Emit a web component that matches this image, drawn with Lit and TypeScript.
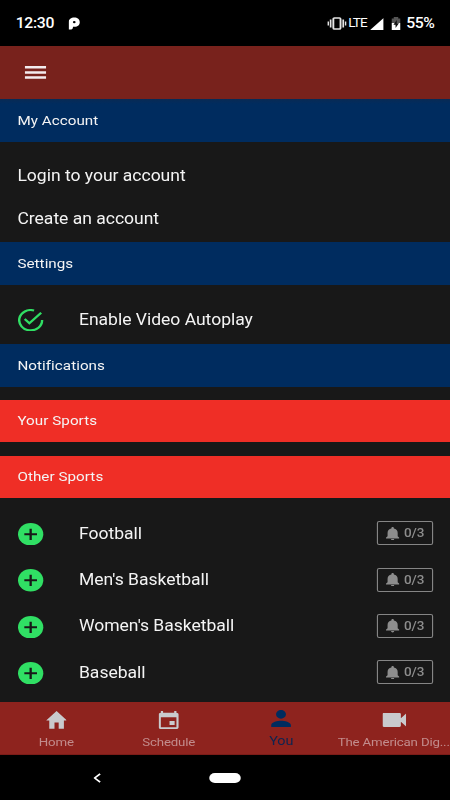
import { LitElement, html, css, svg } from "lit";
import { customElement } from "lit/decorators.js";

const SPORTS = ["Football", "Men's Basketball", "Women's Basketball", "Baseball"];

const TABS = [
  { key: "home", label: "Home", box: "2 3 20 17", w: 18.6, h: 17.8, d: "M10 20v-6h4v6h5v-8h3L12 3 2 12h3v8z" },
  {
    key: "schedule",
    label: "Schedule",
    box: "3 1 18 20",
    w: 17.8,
    h: 18,
    d: "M17.400 12h-4.600v4.600h4.600v-4.600zM17 1v2H7V1H5v2H5c-1.110 0-1.990.9-1.990 2L3 19c0 1.100.89 2 2 2h14c1.100 0 2-.9 2-2V5c0-1.100-.9-2-2-2V1h-2zm2 18H5V8h14v11z",
  },
  {
    key: "you",
    label: "You",
    box: "4 4 16 16",
    w: 17.6,
    h: 17.3,
    d: "M12 12c2.210 0 4-1.790 4-4s-1.790-4-4-4-4 1.790-4 4 1.790 4 4 4zm0 2c-2.670 0-8 1.340-8 4v2h16v-2c0-2.660-5.330-4-8-4z",
  },
  {
    key: "video",
    label: "The American Dig...",
    box: "3 6 18 12",
    w: 21,
    h: 14,
    d: "M17 10.500V7c0-.55-.45-1-1-1H4c-.55 0-1 .45-1 1v10c0 .55.45 1 1 1h12c.55 0 1-.45 1-1v-3.500l4 4v-11l-4 4z",
  },
];

@customElement("app-root")
export class AppRoot extends LitElement {
  static styles = css`
    :host {
      display: block;
      width: 450px;
      height: 800px;
      overflow: hidden;
      background: #181818;
    }
    * { box-sizing: border-box; }
    svg { display: block; flex: none; }
    /* 400px wide layout stretched to the full window width */
    .screen {
      width: 400px;
      height: 800px;
      transform: scaleX(1.125);
      transform-origin: 0 0;
      display: flex;
      flex-direction: column;
      font-family: Roboto, "Liberation Sans", sans-serif;
      color: #f4f4f4;
      white-space: nowrap;
    }
    .status {
      height: 46px;
      flex: none;
      background: #000;
      display: flex;
      align-items: center;
      padding: 0 14px 0 14px;
      font-size: 14px;
      font-weight: 500;
      color: #fff;
    }
    .clock { width: 47px; letter-spacing: -0.3px; }
    .grow { flex: 1; }
    .vibrate { margin-right: 2px; }
    .lte { font-size: 12px; font-weight: 400; letter-spacing: -0.8px; width: 17px; }
    .signal { margin: 1px 7px 0 2.500px; }
    .battery { margin-right: 5px; }
    .pct { width: 25px; letter-spacing: -0.4px; }
    .bar {
      height: 53px;
      flex: none;
      background: #78221c;
      display: flex;
      align-items: center;
      padding-left: 21.500px;
    }
    .head {
      height: 42.500px;
      flex: none;
      background: #002c5f;
      display: flex;
      align-items: center;
      padding-left: 15.500px;
      padding-bottom: 1.500px;
      font-size: 13.500px;
      letter-spacing: 0.04px;
    }
    .first { background: linear-gradient(#092a54, #002c5f 5px); padding-bottom: 0.5px; }
    .red { background: #ef2e26; }
    .links {
      height: 100.500px;
      flex: none;
      padding-top: 13px;
      display: flex;
      flex-direction: column;
      font-size: 15.600px;
      letter-spacing: -0.02px;
    }
    .link { height: 43.300px; padding-left: 15.500px; display: flex; align-items: center; }
    .setting { height: 59.500px; flex: none; padding-top: 12.300px; display: flex; }
    .gap { height: 13.300px; flex: none; }
    .sports { flex: 1; padding-top: 12.500px; }
    .row {
      height: 46.300px;
      width: 400px;
      display: flex;
      align-items: center;
      padding: 0 15px 0 16px;
      font-size: 15.600px;
      letter-spacing: -0.02px;
    }
    .add { margin-top: 1px; }
    .name { flex: 1; margin-left: 31.700px; }
    .alert {
      width: 50px;
      height: 24px;
      border: 1px solid #858585;
      border-radius: 2px;
      display: flex;
      align-items: center;
      padding-left: 7px;
      gap: 4px;
      color: #8d8d8d;
      font-size: 12px;
      font-weight: 500;
      letter-spacing: -0.05px;
      margin-bottom: 0.6px;
    }
    .tabs {
      height: 53px;
      flex: none;
      background: #8e231e;
      border-bottom: 1px solid #7c1c18;
      display: grid;
      grid-template-columns: repeat(4, 100px);
    }
    .tab {
      display: flex;
      flex-direction: column;
      align-items: center;
      font-size: 11.800px;
      letter-spacing: -0.15px;
      line-height: 16px;
      color: #c28c8c;
    }
    .glyph { height: 31.500px; padding-top: 9.200px; fill: #c9cacd; }
    .you { color: #0f2450; font-size: 12.800px; }
    .you .glyph { fill: #002c5f; padding-top: 7.700px; height: 31px; }
    .video .glyph { padding-top: 11px; }
    .system {
      height: 45px;
      flex: none;
      background: #000;
      display: grid;
      grid-template-columns: 173px 54px 1fr;
      align-items: center;
      justify-items: center;
    }
    .pill { width: 28px; height: 10px; border-radius: 5px; background: #fff; }
  `;

  private sport(name: string) {
    return html`<div class="row">
      <svg class="add" width="22.500" height="22.500" viewBox="0 0 22 22">
        <circle cx="11" cy="11" r="11" fill="#30df64" />
        <path d="M11 5.500v11M5.500 11h11" stroke="#181818" stroke-width="2" />
      </svg>
      <span class="name">${name}</span>
      <div class="alert">
        <svg width="12" height="13.500" viewBox="6 2.500 12 19.500" preserveAspectRatio="none" fill="#8d8d8d">
          <path d="M12 22c.8 0 1.400-.9 1.400-2h-2.800c0 1.100.6 2 1.400 2zm4.500-6v-5c0-3.070-1.300-5.640-3.400-6.320V4c0-.83-.5-1.500-1.100-1.500s-1.100.67-1.100 1.500v.68C8.800 5.360 7.500 7.920 7.500 11v5L6 18v1h12v-1l-1.500-2z" />
        </svg>
        <span>0/3</span>
      </div>
    </div>`;
  }

  render() {
    return html`<div class="screen">
      <div class="status">
        <span class="clock">12:30</span>
        <svg width="10" height="13" viewBox="0 0 10 13">
          <path d="M0 12.500V5.500C0 2.300 2.200.5 5 .5s5 2 5 4.700S8 9.800 5.500 9.800H3.800v1.500L2.500 12.500z" fill="#fff" />
          <circle cx="5" cy="5.100" r="1.200" fill="#000" />
        </svg>
        <span class="grow"></span>
        <svg class="vibrate" width="17" height="13" viewBox="0 0 17 13" fill="none" stroke="#e4e4e4">
          <rect x="5.300" y="1" width="6.400" height="11" rx="1" stroke-width="1.700" />
          <path d="M.7 4.500v4M16.300 4.500v4M2.900 2.500v8M14.100 2.500v8" stroke-width="1.500" />
        </svg>
        <span class="lte">LTE</span>
        <svg class="signal" width="12" height="12" viewBox="0 0 12 12"><path d="M0 12 12 0v12z" fill="#fff" /></svg>
        <svg class="battery" width="8" height="13" viewBox="0 0 8 13">
          <path d="M0 1.500h2V0h4v1.500h2V6H0z" fill="#555" />
          <path d="M0 6h8v7H0z" fill="#fff" />
          <path d="M4.700 3 1.700 7.700h1.900V11l3-4.700H4.700z" fill="#111" />
        </svg>
        <span class="pct">55%</span>
      </div>
      <div class="bar">
        <svg width="19.200" height="13" viewBox="0 0 19.200 13"><path d="M0 1.300h19.200M0 6.400h19.200M0 11.500h19.200" stroke="#f3ecee" stroke-width="2.500" /></svg>
      </div>
      <div class="head first">My Account</div>
      <div class="links">
        <div class="link">Login to your account</div>
        <div class="link">Create an account</div>
      </div>
      <div class="head">Settings</div>
      <div class="setting">
        <div class="row">
          <svg width="22.500" height="22.500" viewBox="2 2 20 20" fill="none" stroke="#30df64" stroke-width="1.900">
            <path d="M21.050 11.800A9.050 9.050 0 1 1 14.700 3.350" />
            <path d="M7.300 10.800 11 14.600 20.300 5.300" />
          </svg>
          <span class="name">Enable Video Autoplay</span>
        </div>
      </div>
      <div class="head">Notifications</div>
      <div class="gap"></div>
      <div class="head red">Your Sports</div>
      <div class="gap"></div>
      <div class="head red">Other Sports</div>
      <div class="sports">${SPORTS.map((s) => this.sport(s))}</div>
      <div class="tabs">
        ${TABS.map(
          (t) => html`<div class="tab ${t.key}">
            <div class="glyph">
              <svg width=${t.w} height=${t.h} viewBox=${t.box} preserveAspectRatio="none">${svg`<path d=${t.d} />`}</svg>
            </div>
            <span>${t.label}</span>
          </div>`
        )}
      </div>
      <div class="system">
        <svg width="7" height="10" viewBox="0 0 7 10"><path d="M6 .8 1.200 5 6 9.200" fill="none" stroke="#fff" stroke-width="1.600" /></svg>
        <div class="pill"></div>
      </div>
    </div>`;
  }
}
